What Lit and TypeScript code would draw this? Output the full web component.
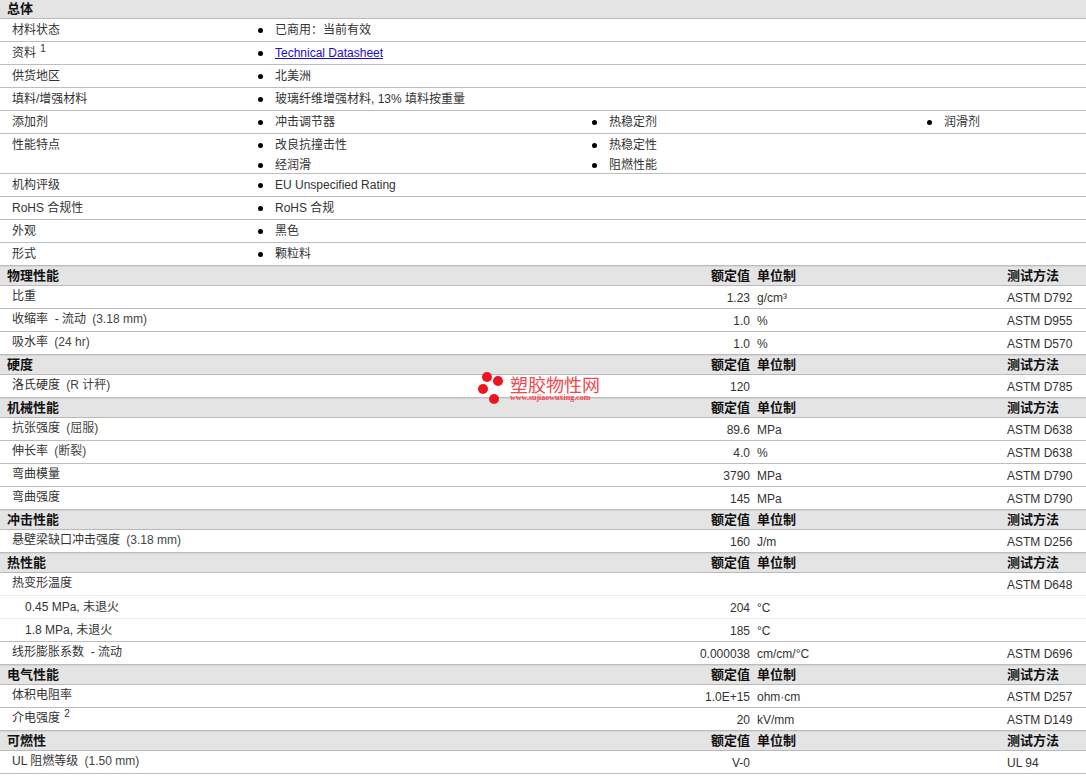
import { LitElement, html, css } from "lit";
import { customElement } from "lit/decorators.js";

type Prop = { label: any; value?: string; unit?: string; method?: string; light?: boolean; indent?: boolean };
type Section = { title: string; rows: Prop[] };

const general: { label: any; items: any[][] }[] = [
  { label: "材料状态", items: [["已商用：当前有效"]] },
  { label: html`资料 <sup class="sup">1</sup>`, items: [[html`<a class="link" href="#">Technical Datasheet</a>`]] },
  { label: "供货地区", items: [["北美洲"]] },
  { label: "填料/增强材料", items: [["玻璃纤维增强材料, 13% 填料按重量"]] },
  { label: "添加剂", items: [["冲击调节器"], ["热稳定剂"], ["润滑剂"]] },
  { label: "性能特点", items: [["改良抗撞击性", "经润滑"], ["热稳定性", "阻燃性能"]] },
  { label: "机构评级", items: [["EU Unspecified Rating"]] },
  { label: "RoHS 合规性", items: [["RoHS 合规"]] },
  { label: "外观", items: [["黑色"]] },
  { label: "形式", items: [["颗粒料"]] },
];

const q = (t: string) => html`<span class="qual">${t}</span>`;

const sections: Section[] = [
  { title: "物理性能", rows: [
    { label: "比重", value: "1.23", unit: "g/cm³", method: "ASTM D792" },
    { label: html`收缩率 &nbsp;- 流动 ${q("(3.18 mm)")}`, value: "1.0", unit: "%", method: "ASTM D955" },
    { label: html`吸水率 ${q("(24 hr)")}`, value: "1.0", unit: "%", method: "ASTM D570" },
  ]},
  { title: "硬度", rows: [
    { label: html`洛氏硬度 ${q("(R 计秤)")}`, value: "120", method: "ASTM D785" },
  ]},
  { title: "机械性能", rows: [
    { label: html`抗张强度 ${q("(屈服)")}`, value: "89.6", unit: "MPa", method: "ASTM D638" },
    { label: html`伸长率 ${q("(断裂)")}`, value: "4.0", unit: "%", method: "ASTM D638" },
    { label: "弯曲模量", value: "3790", unit: "MPa", method: "ASTM D790" },
    { label: "弯曲强度", value: "145", unit: "MPa", method: "ASTM D790" },
  ]},
  { title: "冲击性能", rows: [
    { label: html`悬壁梁缺口冲击强度 ${q("(3.18 mm)")}`, value: "160", unit: "J/m", method: "ASTM D256" },
  ]},
  { title: "热性能", rows: [
    { label: "热变形温度", method: "ASTM D648", light: true },
    { label: "0.45 MPa, 未退火", value: "204", unit: "°C", light: true, indent: true },
    { label: "1.8 MPa, 未退火", value: "185", unit: "°C", indent: true },
    { label: html`线形膨胀系数 &nbsp;- 流动`, value: "0.000038", unit: "cm/cm/°C", method: "ASTM D696" },
  ]},
  { title: "电气性能", rows: [
    { label: "体积电阻率", value: "1.0E+15", unit: "ohm·cm", method: "ASTM D257" },
    { label: html`介电强度 <sup class="sup">2</sup>`, value: "20", unit: "kV/mm", method: "ASTM D149" },
  ]},
  { title: "可燃性", rows: [
    { label: html`UL 阻燃等级 ${q("(1.50 mm)")}`, value: "V-0", method: "UL 94" },
  ]},
];

@customElement("app-root")
export class AppRoot extends LitElement {
  static styles = css`
    :host {
      display: block;
      position: relative;
      width: 1086px;
      height: 776px;
      overflow: hidden;
      background: #fff;
      color: #333;
      font: 12px/16px "Liberation Sans", "Noto Sans CJK SC", sans-serif;
    }
    .head {
      display: grid;
      grid-template-columns: 750px 257px 79px;
      column-gap: 0;
      align-items: center;
      height: 19px;
      box-sizing: border-box;
      padding-top: 0;
      background: #e4e4e4;
      border-bottom: 1px solid #b9b9b9;
      font-size: 13px;
      font-weight: 700;
      color: #111;
      box-shadow: inset 0 1px 0 #d4d4d4;
    }
    .head.first { box-shadow: none; height: 19px; }
    .head.tall { height: 20px; }
    .title { padding-left: 7px; display: flex; justify-content: space-between; }
    .head .r { padding-right: 0; }
    .head .u { padding-left: 7px; }
    .grow { display: flex; border-bottom: 1px solid #bdbdbd; min-height: 23px; box-sizing: border-box; }
    .grow .lab { width: 258px; padding: 3px 0 0 12px; box-sizing: border-box; flex: none; }
    .cols { display: grid; grid-template-columns: 334px 335px 160px; flex: 1; padding-top: 3px; }
    .col { display: flex; flex-direction: column; gap: 4px; }
    .item { display: flex; align-items: center; height: 16px; }
    .dot { width: 5px; height: 5px; border-radius: 50%; background: #000; flex: none; margin: 1px 12px 0 0; }
    .link { color: #1a0dd0; text-decoration: underline; }
    .sup { font-size: 10px; line-height: 0; vertical-align: 5px; color: #333; margin-left: 1px; }
    .prow {
      display: grid;
      grid-template-columns: 750px 250px 86px;
      height: 23px;
      box-sizing: border-box;
      border-bottom: 1px solid #bdbdbd;
    }
    .prow.light { border-bottom-color: #ecebee; }
    .plab { padding: 2px 0 0 12px; white-space: pre; }
    .plab.indent { padding-left: 25px; padding-top: 3px; }
    .val { position: relative; padding-top: 4px; }
    .cell-lab { position: relative; }
    .pv { display: flex; justify-content: space-between; }
    .pv .num { padding-top: 4px; }
    .unit { padding: 4px 0 0 7px; }
    .meth { padding: 4px 0 0 7px; }
    .qual { color: #444; margin-left: 3px; }
    .logo {
      position: absolute;
      left: 478px;
      top: 369px;
      width: 132px;
      height: 36px;
      pointer-events: none;
    }
    .logo svg { position: absolute; left: 0; top: 0; }
    .logo .cn {
      position: absolute;
      left: 32px;
      top: 7px;
      font-size: 18px;
      line-height: 20px;
      color: #f3464c;
      white-space: nowrap;
    }
    .logo .en {
      position: absolute;
      left: 32px;
      top: 24px;
      font: 700 8px/10px "Liberation Serif", serif;
      color: #f3464c;
      white-space: nowrap;
    }
  `;

  private head(title: string, cols: boolean, first = false) {
    return html`<div class="head ${first ? "first" : "tall"}">
      <div class="title">
        <span>${title}</span>
        ${cols ? html`<span>额定值</span>` : ""}
      </div>
      <div class="u">${cols ? "单位制" : ""}</div>
      <div>${cols ? "测试方法" : ""}</div>
    </div>`;
  }

  render() {
    return html`
      ${this.head("总体", false, true)}
      ${general.map(
        (g) => html`<div class="grow">
          <div class="lab">${g.label}</div>
          <div class="cols">
            ${g.items.map(
              (c) => html`<div class="col">
                ${c.map((t) => html`<div class="item"><span class="dot"></span><span>${t}</span></div>`)}
              </div>`
            )}
          </div>
        </div>`
      )}
      ${sections.map(
        (s) => html`
          ${this.head(s.title, true)}
          ${s.rows.map(
            (r) => html`<div class="prow ${r.light ? "light" : ""}">
              <div class="pv">
                <span class="plab ${r.indent ? "indent" : ""}">${r.label}</span>
                <span class="num">${r.value ?? ""}</span>
              </div>
              <div class="unit">${r.unit ?? ""}</div>
              <div class="meth">${r.method ?? ""}</div>
            </div>`
          )}
        `
      )}
      <div class="logo">
        <svg width="30" height="36" viewBox="0 0 30 36">
          <circle cx="9" cy="8" r="5" fill="#f0141e"></circle>
          <circle cx="20" cy="12" r="5" fill="#f0141e"></circle>
          <circle cx="5" cy="20" r="5" fill="#f0141e"></circle>
          <circle cx="16" cy="30" r="5" fill="#f0141e"></circle>
        </svg>
        <span class="cn">塑胶物性网</span>
        <span class="en">www.sujiaowuxing.com</span>
      </div>
    `;
  }
}
